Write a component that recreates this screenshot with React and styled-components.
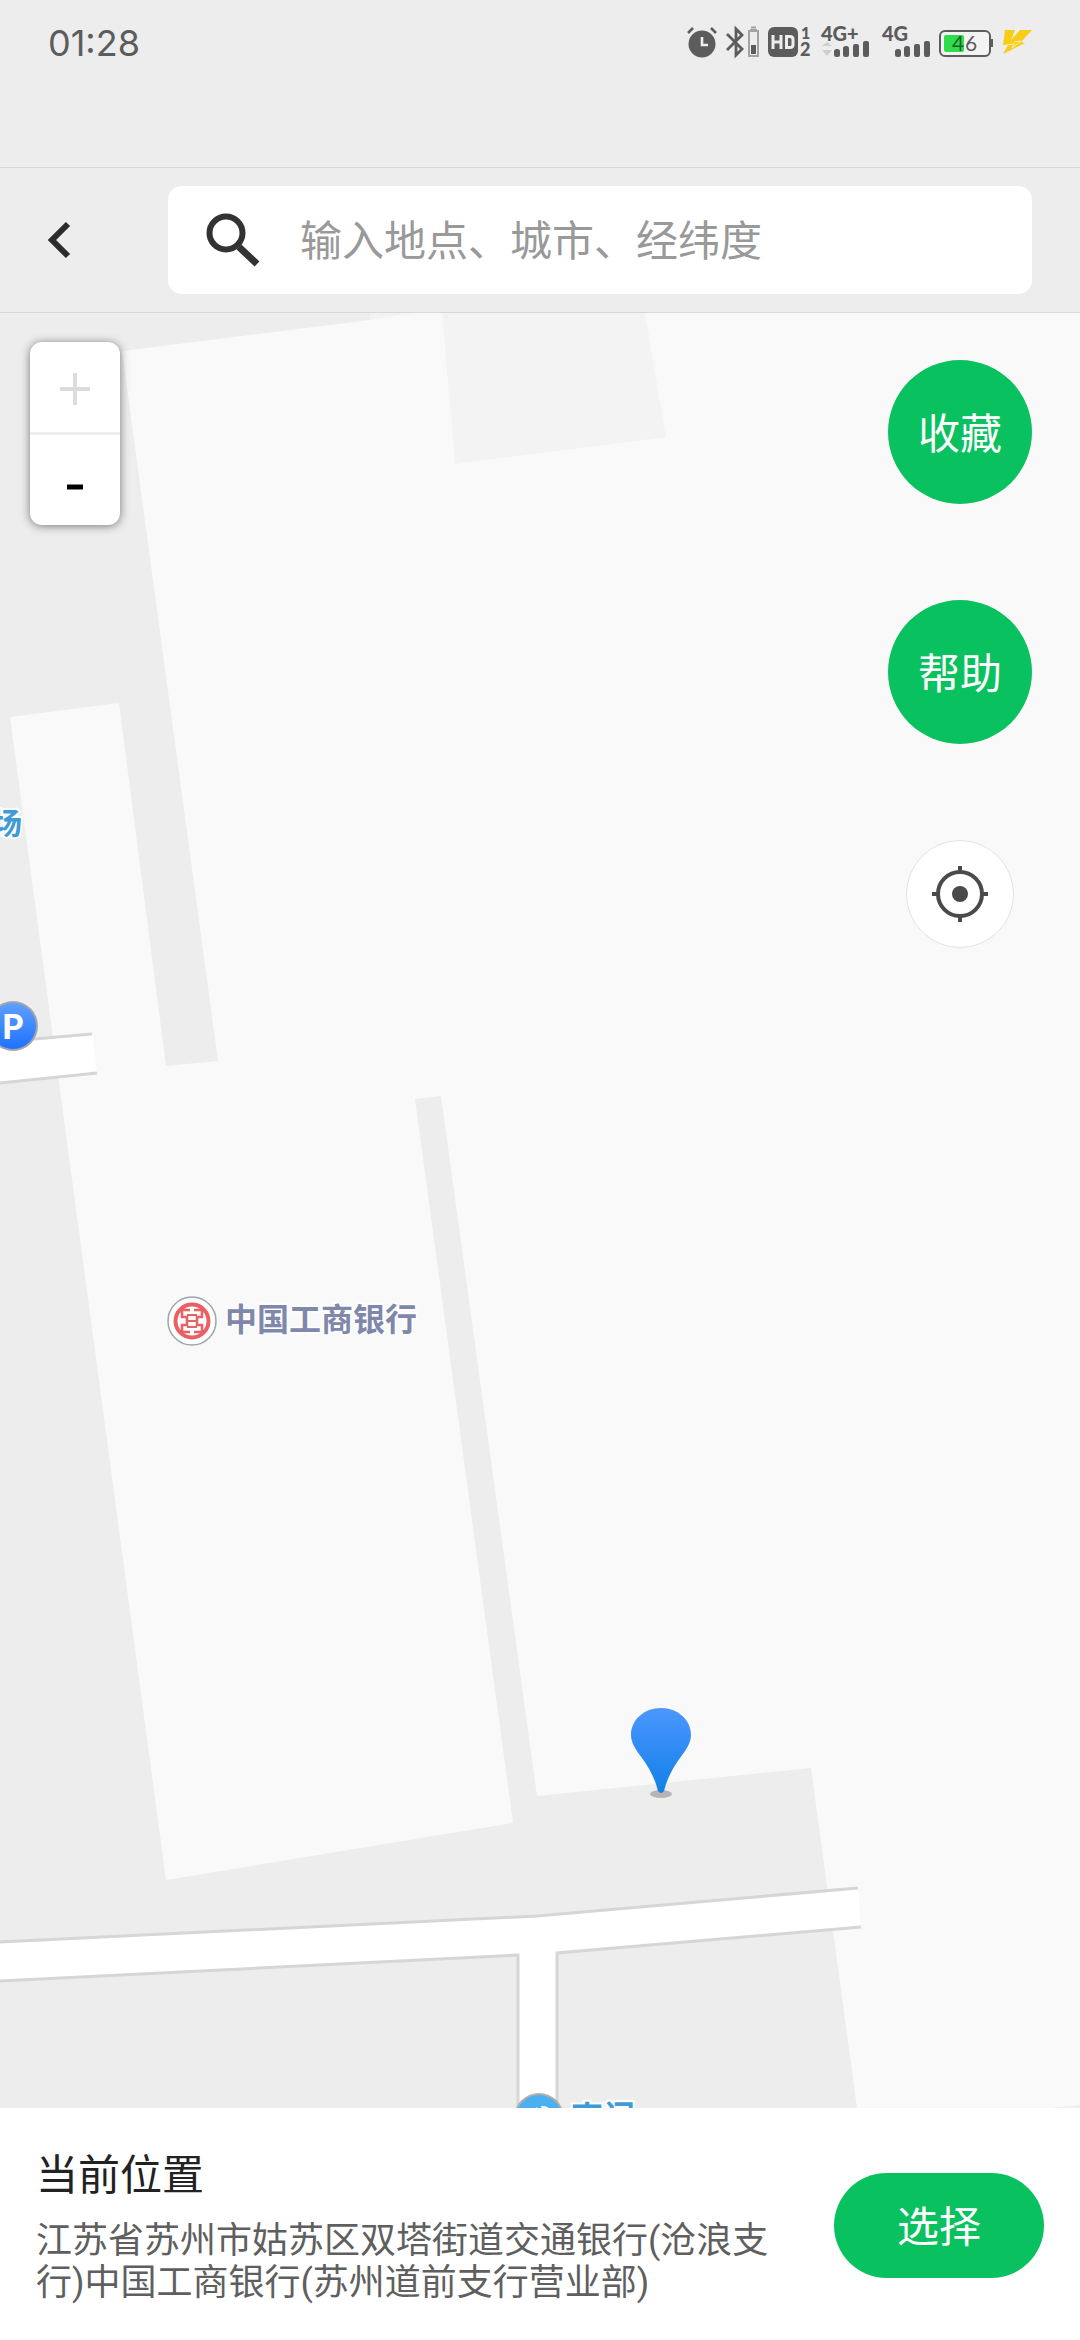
import React from 'react';
import styled, { createGlobalStyle } from 'styled-components';

const Global = createGlobalStyle`
  * { box-sizing: border-box; }
  body {
    margin: 0;
    background: #ededed;
    font-family: Roboto, "Noto Sans CJK SC", sans-serif;
  }
  button, input { font-family: inherit; }
`;

const Page = styled.div`
  min-height: 100vh;
  display: flex;
  flex-direction: column;
`;

const StatusBar = styled.header`
  height: 168px;
  padding: 26px 48px 0;
  display: flex;
  justify-content: space-between;
  align-items: flex-start;
  border-bottom: 1px solid #d8d8d8;
`;

const Clock = styled.time`
  font-family: Inter, sans-serif;
  font-size: 36px;
  line-height: 34px;
  color: #5c5c5c;
`;

const StatusIcons = styled.div`
  display: flex;
  gap: 9px;
`;

const Glyph = styled.svg`
  display: block;
  height: 32px;
  overflow: visible;
  fill: #5c5c5c;
  font-family: Lato, sans-serif;
  font-weight: 900;
`;

const SearchBar = styled.form`
  display: flex;
  align-items: center;
  padding: 18px 48px;
  border-bottom: 1px solid #d8d8d8;
`;

const BackButton = styled.button`
  width: 120px;
  height: 72px;
  padding: 0;
  border: 0;
  background: none;
  display: flex;
  align-items: center;
`;

const SearchBox = styled.label`
  flex: 1;
  height: 108px;
  padding: 0 36px;
  display: flex;
  align-items: center;
  gap: 40px;
  background: #fff;
  border-radius: 14px;
`;

const SearchInput = styled.input`
  flex: 1;
  min-width: 0;
  height: 72px;
  padding: 2px 0 0;
  border: 0;
  outline: 0;
  background: none;
  font-size: 42px;
  color: #222;
  &::placeholder { color: #999; opacity: 1; }
`;

const MapArea = styled.main`
  flex: 1;
  position: relative;
  min-height: 800px;
  overflow: hidden;
  display: flex;
  justify-content: space-between;
  align-items: flex-start;
  background: #f9f9f9;
`;

const MapCanvas = styled.svg`
  position: absolute;
  inset: 0;
  width: 100%;
  height: 100%;
  font-family: "Noto Sans CJK SC", sans-serif;
`;

const ZoomControl = styled.div`
  position: relative;
  width: 90px;
  margin: 29px 30px;
  display: flex;
  flex-direction: column;
  background: #fff;
  border-radius: 12px;
  box-shadow: 0 1px 10px rgba(0, 0, 0, 0.5);
`;

const ZoomButton = styled.button`
  height: 90px;
  padding: 0;
  border: 0;
  background: none;
  display: flex;
  align-items: center;
  justify-content: center;
  color: #000;
  & + & { height: 93px; border-top: 3px solid #eee; }
  &:disabled { color: #dcdcdc; }
`;

const Actions = styled.div`
  position: relative;
  margin: 47px 48px;
  display: flex;
  flex-direction: column;
  align-items: center;
  gap: 96px;
`;

const GreenButton = styled.button`
  padding: 0 0 4px;
  border: 0;
  background: #0ac160;
  color: #fff;
  font-size: 42px;
`;

const RoundButton = styled(GreenButton)`
  width: 144px;
  height: 144px;
  border-radius: 50%;
`;

const SelectButton = styled(GreenButton)`
  width: 210px;
  height: 105px;
  border-radius: 53px;
`;

const LocateButton = styled.button`
  width: 108px;
  height: 108px;
  padding: 0;
  border: 1px solid #e2e2e2;
  border-radius: 50%;
  background: #fff;
  display: flex;
  align-items: center;
  justify-content: center;
`;

const Panel = styled.footer`
  padding: 38px 36px 36px;
  display: flex;
  align-items: center;
  gap: 36px;
  background: #fff;
`;

const Place = styled.div`
  flex: 1;
  display: flex;
  flex-direction: column;
  gap: 14px;
`;

const PlaceTitle = styled.h1`
  margin: 0;
  font-size: 42px;
  font-weight: 400;
  line-height: 60px;
  color: #222;
`;

const PlaceAddress = styled.p`
  margin: 0;
  font-size: 36px;
  line-height: 42px;
  color: #5f5f5f;
`;

function AlarmIcon() {
  return (
    <Glyph width="30" viewBox="0 0 30 32" aria-hidden="true">
      <circle cx="15" cy="18" r="13.5" />
      <path d="M1 7 6 2M29 7 24 2" stroke="#5c5c5c" strokeWidth="2.6" />
      <path d="M15 11v8h6" fill="none" stroke="#ededed" strokeWidth="2.6" />
    </Glyph>
  );
}

function BluetoothIcon() {
  return (
    <Glyph width="34" viewBox="0 0 34 32" aria-hidden="true">
      <path d="M1 8 16 23l-6 6V3l6 6L1 24" fill="none" stroke="#5c5c5c" strokeWidth="2.8" />
      <path d="M24 4h7M23 5h9v25h-9z" fill="none" stroke="#a3a3a3" strokeWidth="2" />
      <path d="M25 1.5h5" stroke="#a3a3a3" strokeWidth="2" />
      <path d="M25 19h5v9h-5z" />
    </Glyph>
  );
}

function HdIcon() {
  return (
    <Glyph width="43" viewBox="0 0 43 32" aria-hidden="true">
      <rect x="-1" y="1" width="30" height="30" rx="6" />
      <path d="M4 9v14M12 9v14M4 16h8M17.500 10.500h3.500q3 0 3 3v5q0 3-3 3h-3.500z" fill="none" stroke="#ededed" strokeWidth="3" />
      <text x="32" y="13" fontSize="16">1</text>
      <text x="31" y="30" fontSize="18">2</text>
    </Glyph>
  );
}

function SignalIcon({ label, arrows, shift = 0 }) {
  return (
    <Glyph width="50" viewBox="0 0 50 32" aria-hidden="true">
      <text x={shift} y="15" fontSize="20">{label}</text>
      {arrows && <path d="M1 20l5-4 5 4zM1 24l5 6 5-6z" fill="#cfcfcf" />}
      <g transform={`translate(${shift} 0)`}>
        <rect x="13" y="23" width="6" height="8" rx="2.5" />
        <rect x="22" y="20" width="6" height="11" rx="2.5" />
        <rect x="32" y="18" width="6" height="13" rx="2" />
        <rect x="42" y="15" width="6" height="16" rx="2" />
      </g>
    </Glyph>
  );
}

function BatteryIcon() {
  return (
    <Glyph width="54" viewBox="0 0 54 32" aria-hidden="true">
      <rect x="1" y="5" width="50" height="25" rx="5" fill="#f3f3f3" stroke="#5c5c5c" strokeWidth="2" />
      <rect x="5" y="9" width="20" height="17" rx="2" fill="#2fdc4c" />
      <path d="M53 13v8" stroke="#5c5c5c" strokeWidth="2" />
      <text x="13" y="25" fontSize="21" fontWeight="400" fill="#1b6428">4</text>
      <text x="26" y="25" fontSize="21" fontWeight="400">6</text>
    </Glyph>
  );
}

function BoltIcon() {
  return (
    <Glyph width="30" viewBox="0 0 30 32" aria-hidden="true">
      <path d="M3 4h10L9 14 18 4h12L19 16l4 1L1 28l5-9H1z" fill="#f8ce14" />
      <path d="M4 19l8-1-2 4 9-7-7 1" fill="none" stroke="#f6ecc0" strokeWidth="1" />
    </Glyph>
  );
}

function MapDrawing() {
  return (
    <MapCanvas viewBox="0 313 1080 1795" preserveAspectRatio="xMidYMid slice" role="img" aria-label="地图">
      <defs>
        <linearGradient id="pin" x1="0" y1="0" x2="0" y2="1">
          <stop offset="0" stopColor="#4b97ff" />
          <stop offset="1" stopColor="#1280e6" />
        </linearGradient>
        <linearGradient id="parking" x1="0" y1="0" x2="0" y2="1">
          <stop offset="0" stopColor="#5f9fff" />
          <stop offset="1" stopColor="#1f72ff" />
        </linearGradient>
      </defs>

      <path d="M0 313H370V320L122 351 218 1061 166 1066 119 703 10 717 166 1880 513 1823 415 1099 441 1096 537 1796 811 1768 857 2108H0z" fill="#ededed" />
      <path d="M370 313H415L370 320z" fill="#f3f3f3" />
      <path d="M442 313 455 464 666 437 645 313z" fill="#f3f3f3" />
      <path d="M1050 2108 1080 2105V2108z" fill="#efefef" />

      <path d="M0 1042 92 1034 97 1073 0 1083z" fill="#fff" />
      <path d="M0 1942 537 1916 858 1888 861 1927 557 1953V2108H518V1955L0 1981z" fill="#fff" />
      <path d="M0 1042 92 1034M0 1083 97 1073M0 1942 537 1916 858 1888M0 1981 518 1955V2108M557 2108V1953L861 1927" fill="none" stroke="#d6d6d6" strokeWidth="3" />

      <g fontSize="30" fontWeight="700" fill="#3f9bd6" stroke="#fff" strokeWidth="4" paintOrder="stroke">
        <text x="-8" y="834">场</text>
        <text x="571" y="2129" fontSize="32">南门</text>
      </g>

      <circle cx="13" cy="1026" r="25" fill="#a2a5ab" />
      <circle cx="13" cy="1026" r="23" fill="url(#parking)" />
      <text x="2" y="1039" fontSize="34" fontWeight="900" fontFamily="Lato, sans-serif" fill="#fff">P</text>

      <circle cx="192" cy="1321" r="24" fill="#fff" stroke="#9aa8a8" strokeWidth="1.5" />
      <g transform="translate(192 1321)" fill="none" stroke="#ea6064">
        <circle r="16.5" strokeWidth="4" />
        <path d="M-2-11H-10V-4H-5V4H-10V11H-2M2-11H10V-4H5V4H10V11H2" strokeWidth="2.6" />
        <path d="M-5 0H5M-5-6H5M-5 6H5" strokeWidth="2" />
      </g>
      <text x="225" y="1331" fontSize="32" fontWeight="700" fill="#7f87ab" stroke="#fff" strokeWidth="3" paintOrder="stroke">中国工商银行</text>

      <circle cx="539" cy="2118" r="25" fill="#b3aea8" />
      <circle cx="539" cy="2118" r="23" fill="#4bb0f2" />
      <path d="M533 2110l4-3v6zM541 2106q8-1 10 6l-8-1z" fill="#fff" />

      <ellipse cx="661" cy="1794" rx="11" ry="4" fill="#b9b4b3" />
      <path d="M661 1708c17 0 30 12 30 27 0 8-5 15-11 23-8 11-13 21-16 33q-3 4-6 0c-3-12-8-22-16-33-6-8-11-15-11-23 0-15 13-27 30-27z" fill="url(#pin)" />
    </MapCanvas>
  );
}

export default function App() {
  return (
    <Page>
      <Global />
      <StatusBar>
        <Clock>01:28</Clock>
        <StatusIcons>
          <AlarmIcon />
          <BluetoothIcon />
          <HdIcon />
          <SignalIcon label="4G+" arrows />
          <SignalIcon label="4G" shift={2} />
          <BatteryIcon />
          <BoltIcon />
        </StatusIcons>
      </StatusBar>

      <SearchBar>
        <BackButton type="button" aria-label="返回">
          <svg width="24" height="38" viewBox="0 0 24 38" fill="none" stroke="#2c2c2c" strokeWidth="6">
            <path d="M20 3 4 19l16 16" />
          </svg>
        </BackButton>
        <SearchBox>
          <svg width="56" height="56" viewBox="0 0 56 56" fill="none" stroke="#333" aria-hidden="true">
            <circle cx="22" cy="21" r="16.5" strokeWidth="6" />
            <path d="M35 35 53 52" strokeWidth="7" />
          </svg>
          <SearchInput type="text" aria-label="搜索" placeholder="输入地点、城市、经纬度" />
        </SearchBox>
      </SearchBar>

      <MapArea>
        <MapDrawing />
        <ZoomControl>
          <ZoomButton type="button" aria-label="放大" disabled>
            <svg width="30" height="36" viewBox="0 0 30 36" stroke="currentColor" strokeWidth="4">
              <path d="M15 4v32M0 20h30" />
            </svg>
          </ZoomButton>
          <ZoomButton type="button" aria-label="缩小">
            <svg width="16" height="20" viewBox="0 0 16 20" stroke="currentColor" strokeWidth="5">
              <path d="M0 17h16" />
            </svg>
          </ZoomButton>
        </ZoomControl>
        <Actions>
          <RoundButton type="button">收藏</RoundButton>
          <RoundButton type="button">帮助</RoundButton>
          <LocateButton type="button" aria-label="定位">
            <svg width="56" height="56" viewBox="0 0 56 56" fill="none" stroke="#4a4a4a" strokeWidth="4">
              <circle cx="28" cy="28" r="22" />
              <circle cx="28" cy="28" r="8" fill="#4a4a4a" stroke="none" />
              <path d="M28 0v6M28 50v6M0 28h6M50 28h6" />
            </svg>
          </LocateButton>
        </Actions>
      </MapArea>

      <Panel>
        <Place>
          <PlaceTitle>当前位置</PlaceTitle>
          <PlaceAddress>江苏省苏州市姑苏区双塔街道交通银行(沧浪支行)中国工商银行(苏州道前支行营业部)</PlaceAddress>
        </Place>
        <SelectButton type="button">选择</SelectButton>
      </Panel>
    </Page>
  );
}
